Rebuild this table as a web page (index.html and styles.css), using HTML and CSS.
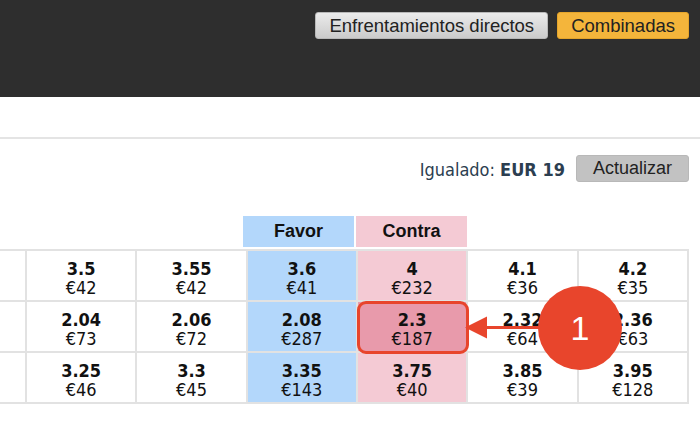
FILE: index.html
```html
<!DOCTYPE html>
<html lang="es">
<head>
<meta charset="utf-8">
<title>Combinadas</title>
<link rel="stylesheet" href="styles.css">
</head>
<body>
<header class="topbar">
  <button class="btn btn-light">Enfrentamientos directos</button>
  <button class="btn btn-orange">Combinadas</button>
</header>
<div class="spacer"></div>
<div class="toolbar">
  <span class="matched">Igualado: <b>EUR 19</b></span>
  <button class="btn btn-gray">Actualizar</button>
</div>
<div class="colheads">
  <div class="colhead favor">Favor</div>
  <div class="colhead contra">Contra</div>
</div>
<div class="ladder">
  <div class="cell"></div>
  <div class="cell"><b>3.5</b><span>€42</span></div>
  <div class="cell"><b>3.55</b><span>€42</span></div>
  <div class="cell favor"><b>3.6</b><span>€41</span></div>
  <div class="cell contra"><b>4</b><span>€232</span></div>
  <div class="cell"><b>4.1</b><span>€36</span></div>
  <div class="cell"><b>4.2</b><span>€35</span></div>

  <div class="cell"></div>
  <div class="cell"><b>2.04</b><span>€73</span></div>
  <div class="cell"><b>2.06</b><span>€72</span></div>
  <div class="cell favor"><b>2.08</b><span>€287</span></div>
  <div class="cell contra hl"><b>2.3</b><span>€187</span></div>
  <div class="cell"><b>2.32</b><span>€64</span></div>
  <div class="cell"><b>2.36</b><span>€63</span></div>

  <div class="cell"></div>
  <div class="cell"><b>3.25</b><span>€46</span></div>
  <div class="cell"><b>3.3</b><span>€45</span></div>
  <div class="cell favor"><b>3.35</b><span>€143</span></div>
  <div class="cell contra"><b>3.75</b><span>€40</span></div>
  <div class="cell"><b>3.85</b><span>€39</span></div>
  <div class="cell"><b>3.95</b><span>€128</span></div>
</div>
<svg class="callout" width="700" height="441" viewBox="0 0 700 441" aria-hidden="false">
  <line x1="484" y1="327.5" x2="545" y2="327.5" stroke="#e8452c" stroke-width="3"/>
  <polygon points="465,327.5 487,316.5 487,338.5" fill="#e8452c"/>
  <circle cx="580" cy="328" r="42" fill="#e8452c"/>
  <text x="580" y="340" text-anchor="middle" class="callout-num">1</text>
</svg>
</body>
</html>
```
FILE: styles.css
```css
* { box-sizing: border-box; }
html, body { margin: 0; padding: 0; background: #ffffff; }
body {
  width: 700px;
  height: 441px;
  overflow: hidden;
  position: relative;
  font-family: "Liberation Sans", Arial, sans-serif;
}
.topbar {
  height: 97px;
  background: #2e2e2e;
  display: flex;
  justify-content: flex-end;
  align-items: flex-start;
  gap: 9px;
  padding: 12px 11px 0 0;
}
.btn {
  font-family: "Liberation Sans", Arial, sans-serif;
  font-size: 18.5px;
  color: #222;
  height: 27px;
  line-height: 25px;
  padding: 0 13px;
  border-radius: 3px;
  border: 1px solid transparent;
  margin: 0;
  cursor: pointer;
}
.btn-light {
  background: linear-gradient(#ebebeb, #cbcbcb);
  border-color: #b8b8b8;
}
.btn-orange {
  background: #f4b53b;
  border-color: #e5a52b;
}
.btn-gray {
  background: #c2c2c2;
  border-color: #b8b8b8;
  font-size: 18px;
  padding: 0 16px;
}
.spacer {
  height: 42px;
  border-bottom: 2px solid #e4e4e4;
}
.toolbar {
  display: flex;
  justify-content: flex-end;
  align-items: center;
  gap: 11px;
  padding: 16px 11px 0 0;
  height: 43px;
}
.matched {
  font-family: "DejaVu Sans Condensed", "DejaVu Sans", sans-serif;
  font-stretch: condensed;
  font-size: 18px;
  color: #2c3e50;
  padding-top: 2px;
}
.matched b { font-weight: bold; }
.colheads {
  display: flex;
  gap: 2px;
  padding: 34px 0 0 243px;
  height: 65px;
}
.colhead {
  width: 111px;
  height: 31px;
  display: flex;
  align-items: center;
  justify-content: center;
  font-family: "Liberation Sans", Arial, sans-serif;
  font-weight: bold;
  font-size: 18px;
  color: #111;
}
.favor { background: #b3d7fb; }
.contra { background: #f4cad4; }
.ladder {
  margin-top: 2px;
  width: 689px;
  display: grid;
  grid-template-columns: 25px repeat(6, 1fr);
  grid-auto-rows: 49px;
  gap: 2px;
  background: #e2e2e2;
  border: 2px solid #e2e2e2;
  border-left: 0;
}
.cell {
  background: #ffffff;
  display: flex;
  flex-direction: column;
  align-items: center;
  padding-top: 8px;
  font-family: "DejaVu Sans Condensed", "DejaVu Sans", sans-serif;
  font-stretch: condensed;
  font-size: 18px;
  line-height: 19px;
  color: #111;
}
.cell b { font-weight: bold; }
.cell.favor { background: #b3d7fb; }
.cell.contra { background: #f4cad4; }
.cell.hl {
  position: relative;
  background: #e89aab;
}
.cell.hl::after {
  content: "";
  position: absolute;
  top: -1px;
  left: -1px;
  right: -3px;
  bottom: -3px;
  border: 3px solid #e8452c;
  border-radius: 9px;
}
.callout {
  position: absolute;
  left: 0;
  top: 0;
  pointer-events: none;
}
.callout-num {
  font-family: "Liberation Sans", Arial, sans-serif;
  font-size: 34px;
  fill: #ffffff;
}
```
